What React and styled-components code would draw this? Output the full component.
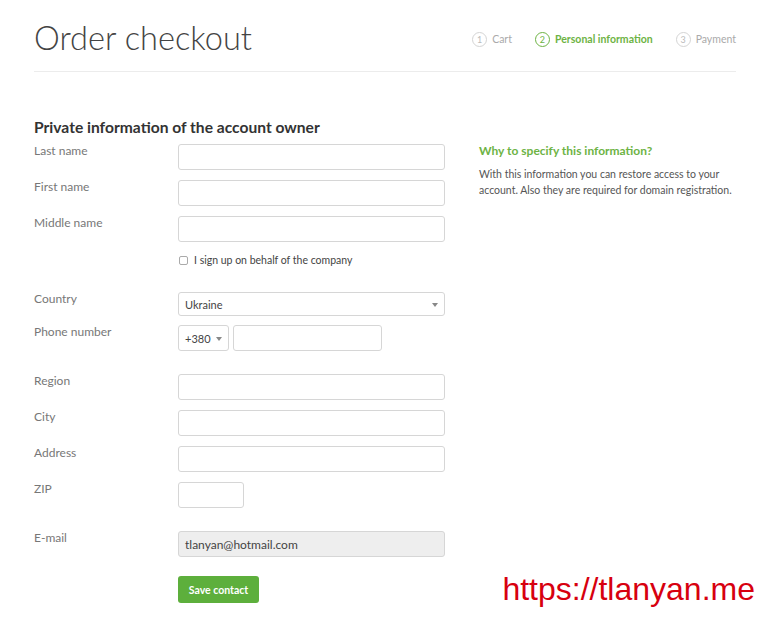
import React from "react";
import styled, { createGlobalStyle } from "styled-components";

const GlobalStyle = createGlobalStyle`
  html, body {
    margin: 0;
    padding: 0;
    background: #fff;
  }
  body {
    font-family: Lato, "Open Sans", sans-serif;
    color: #333;
  }
`;

const steps = [
  { n: 1, label: "Cart" },
  { n: 2, label: "Personal information", active: true },
  { n: 3, label: "Payment" },
];

const App = () => {
  return (
    <Page>
      <GlobalStyle />
      <Header>
        <Title>Order checkout</Title>
        <Steps>
          {steps.map((s) => (
            <Step key={s.n} $active={s.active}>
              <StepNum $active={s.active}>{s.n}</StepNum>
              {s.label}
            </Step>
          ))}
        </Steps>
      </Header>

      <Content>
        <Form>
          <Heading>Private information of the account owner</Heading>
          <Row $mt={8}>
            <Label>Last name</Label>
            <Input />
          </Row>
          <Row $mt={10}>
            <Label>First name</Label>
            <Input />
          </Row>
          <Row $mt={10}>
            <Label>Middle name</Label>
            <Input />
          </Row>
          <Row $mt={11}>
            <span />
            <Check>
              <Box />I sign up on behalf of the company
            </Check>
          </Row>
          <Row $mt={25}>
            <Label>Country</Label>
            <Select>
              Ukraine
              <Caret />
            </Select>
          </Row>
          <Row $mt={9}>
            <Label>Phone number</Label>
            <Phone>
              <Code>
                +380
                <Caret />
              </Code>
              <Input $w={149} />
            </Phone>
          </Row>
          <Row $mt={23}>
            <Label>Region</Label>
            <Input />
          </Row>
          <Row $mt={10}>
            <Label>City</Label>
            <Input />
          </Row>
          <Row $mt={10}>
            <Label>Address</Label>
            <Input />
          </Row>
          <Row $mt={10}>
            <Label>ZIP</Label>
            <Input $w={66} />
          </Row>
          <Row $mt={23}>
            <Label>E-mail</Label>
            <Input $disabled>tlanyan@hotmail.com</Input>
          </Row>
          <Row $mt={19}>
            <span />
            <Button>Save contact</Button>
          </Row>
        </Form>

        <Aside>
          <AsideTitle>Why to specify this information?</AsideTitle>
          <AsideText>
            With this information you can restore access to your account. Also
            they are required for domain registration.
          </AsideText>
        </Aside>
      </Content>

      <Watermark>https://tlanyan.me</Watermark>
    </Page>
  );
};

const Page = styled.div`
  position: relative;
  width: 768px;
  height: 621px;
  overflow: hidden;
  padding: 0 32px 0 34px;
  box-sizing: border-box;
`;

const Header = styled.div`
  display: flex;
  align-items: center;
  justify-content: space-between;
  padding-top: 18px;
  padding-bottom: 14px;
  border-bottom: 1px solid #ececec;
`;

const Title = styled.h1`
  margin: 0;
  font-family: Lato, sans-serif;
  font-weight: 300;
  font-size: 32.6px;
  line-height: 39px;
  color: #444;
`;

const Steps = styled.div`
  display: flex;
  gap: 23px;
  margin-top: 3px;
`;

const Step = styled.div`
  display: flex;
  align-items: center;
  gap: 5px;
  font-size: 10.5px;
  color: ${(p) => (p.$active ? "#6db344" : "#aaa")};
  font-weight: ${(p) => (p.$active ? 700 : 400)};
`;

const StepNum = styled.span`
  width: 13px;
  height: 13px;
  border-radius: 50%;
  border: 1px solid ${(p) => (p.$active ? "#6db344" : "#d4d4d4")};
  display: flex;
  align-items: center;
  justify-content: center;
  font-size: 9px;
  font-weight: 400;
  color: ${(p) => (p.$active ? "#6db344" : "#bbb")};
`;

const Content = styled.div`
  display: flex;
  gap: 34px;
  padding-top: 46px;
`;

const Form = styled.div`
  display: flex;
  flex-direction: column;
  width: 411px;
`;

const Heading = styled.h2`
  margin: 0;
  font-size: 15.6px;
  font-weight: 700;
  line-height: 18px;
  color: #333;
`;

const Row = styled.div`
  display: grid;
  grid-template-columns: 144px 1fr;
  align-items: start;
  margin-top: ${(p) => p.$mt}px;
`;

const Label = styled.div`
  font-size: 12px;
  line-height: 14px;
  color: #777;
`;

const Input = styled.div`
  box-sizing: border-box;
  width: ${(p) => (p.$w ? `${p.$w}px` : "267px")};
  height: 26px;
  border: 1px solid #d6d6d6;
  border-radius: 3px;
  background: ${(p) => (p.$disabled ? "#eeeeee" : "#fff")};
  font-size: 12px;
  color: #444;
  display: flex;
  align-items: center;
  padding: 0 6px;
`;

const Select = styled.div`
  position: relative;
  box-sizing: border-box;
  width: 267px;
  height: 24px;
  border: 1px solid #d6d6d6;
  border-radius: 3px;
  font-size: 11px;
  color: #444;
  display: flex;
  align-items: center;
  padding: 0 6px;
`;

const Caret = styled.span`
  position: absolute;
  right: 6px;
  top: 50%;
  margin-top: -1px;
  border-left: 3px solid transparent;
  border-right: 3px solid transparent;
  border-top: 4px solid #888;
`;

const Phone = styled.div`
  display: flex;
  gap: 4px;
`;

const Code = styled(Select)`
  width: 51px;
  height: 26px;
`;

const Check = styled.label`
  display: flex;
  align-items: center;
  gap: 6px;
  font-size: 10.5px;
  line-height: 14px;
  color: #444;
`;

const Box = styled.span`
  box-sizing: border-box;
  width: 9px;
  height: 9px;
  border: 1px solid #aaa;
  border-radius: 2px;
  margin-left: 1px;
`;

const Button = styled.button`
  justify-self: start;
  height: 27px;
  width: 81px;
  border: none;
  border-radius: 3px;
  background: #5daf3c;
  color: #fff;
  font-family: Lato, sans-serif;
  font-weight: 700;
  font-size: 10.5px;
  padding: 0;
`;

const Aside = styled.div`
  width: 257px;
  padding-top: 25px;
`;

const AsideTitle = styled.div`
  font-size: 12px;
  font-weight: 700;
  color: #6db344;
  line-height: 16px;
`;

const AsideText = styled.p`
  margin: 7px 0 0;
  font-size: 10.5px;
  line-height: 16px;
  color: #555;
`;

const Watermark = styled.div`
  position: absolute;
  right: 13px;
  top: 571px;
  font-family: "Liberation Sans", Arial, sans-serif;
  font-size: 32px;
  color: #d7000f;
`;

export default App;
